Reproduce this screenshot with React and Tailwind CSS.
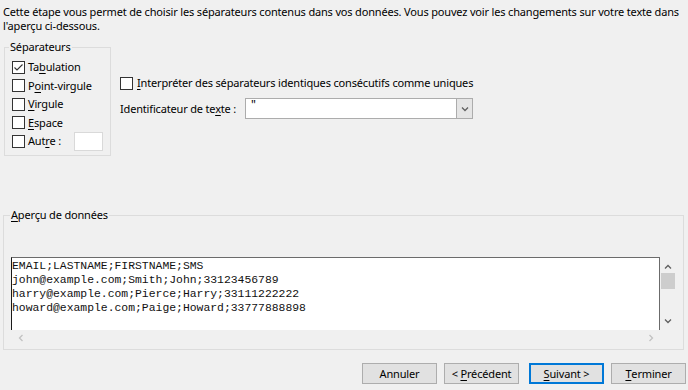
import React from 'react';

const Check = ({ checked }) => (
  <span className="w-[13px] h-[13px] border border-[#333333] bg-white shrink-0 flex items-center justify-center">
    {checked && (
      <svg width="11" height="11" viewBox="0 0 11 11">
        <path d="M1.5 5.5 L4 8 L9.5 2.5" fill="none" stroke="#333333" strokeWidth="1.1" />
      </svg>
    )}
  </span>
);

const U = ({ children }) => <span className="underline underline-offset-[2px] decoration-[1px]">{children}</span>;

const Chevron = ({ dir = 'down', color = '#606060', size = 8 }) => {
  const paths = {
    down: 'M1 2.5 L4 5.5 L7 2.5',
    up: 'M1 5.5 L4 2.5 L7 5.5',
    left: 'M5.5 1 L2.5 4 L5.5 7',
    right: 'M2.5 1 L5.5 4 L2.5 7',
  };
  return (
    <svg width={size} height={size} viewBox="0 0 8 8">
      <path d={paths[dir]} fill="none" stroke={color} strokeWidth="1.3" />
    </svg>
  );
};

const Btn = ({ children, primary }) => (
  <button
    className={`w-[75px] h-[21px] flex items-center justify-center bg-[#e1e1e1] text-black leading-none whitespace-pre ${
      primary ? 'border-2 border-[#0078d7]' : 'border border-[#adadad]'
    }`}
  >
    {children}
  </button>
);

const rows = [
  { label: <>Ta<U>b</U>ulation</>, checked: true },
  { label: <>P<U>o</U>int-virgule</> },
  { label: <><U>V</U>irgule</> },
  { label: <><U>E</U>space</> },
];

const preview = [
  'EMAIL;LASTNAME;FIRSTNAME;SMS',
  'john@example.com;Smith;John;33123456789',
  'harry@example.com;Pierce;Harry;33111222222',
  'howard@example.com;Paige;Howard;33777888898',
];

export default function App() {
  return (
    <div className="w-[688px] h-[390px] bg-[#f0f0f0] text-black text-[11px] tracking-[-0.17px] leading-[14px] font-['Noto_Sans',sans-serif] overflow-hidden">
      <p className="pl-[3px] pt-[5px] whitespace-nowrap">
        Cette étape vous permet de choisir les séparateurs contenus dans vos données. Vous pouvez voir les changements sur votre texte dans
        <br />
        l'aperçu ci-dessous.
      </p>

      <div className="flex mt-[7px]">
        <fieldset className="ml-[4px] w-[107px] h-[116px] border border-[#dcdcdc] pl-[7px] pt-[4px]">
          <legend className="-ml-[3px] px-[1px] h-[14px]">Séparateurs</legend>
          {rows.map((r, i) => (
            <div key={i} className="flex items-center h-[18.5px] gap-[3px] whitespace-nowrap">
              <Check checked={r.checked} />
              <span>{r.label}</span>
            </div>
          ))}
          <div className="flex items-center h-[18.5px] gap-[3px] whitespace-nowrap">
            <Check />
            <span>Aut<U>r</U>e :</span>
            <span className="ml-[10px] w-[29px] h-[19px] bg-white border border-[#d9d9d9]" />
          </div>
        </fieldset>

        <div className="ml-[9px] pt-[35px]">
          <div className="flex items-center h-[16px] gap-[4px] whitespace-nowrap">
            <Check />
            <span><U>I</U>nterpréter des séparateurs identiques consécutifs comme uniques</span>
          </div>
          <div className="flex items-center mt-[7px] whitespace-nowrap">
            <span className="w-[125px]">Identificateur de te<U>x</U>te :</span>
            <div className="w-[228px] h-[21px] bg-white border border-[#acacac] flex">
              <span className="flex-1 pl-[5px] leading-[12px] text-[12px]">"</span>
              <span className="w-[16px] h-full bg-[#e5e5e5] border-l border-[#acacac] flex items-center justify-center">
                <Chevron />
              </span>
            </div>
          </div>
        </div>
      </div>

      <fieldset className="mt-[52px] ml-[3px] w-[681px] h-[142px] border border-[#dcdcdc] pl-[8px] pr-[6px]">
        <legend className="-ml-[2px] px-[1px] h-[14px]"><U>A</U>perçu de données</legend>
        <div className="flex mt-[35px]">
          <div className="w-[649px] h-[73px] bg-white border-t border-l border-r border-t-[#6b6b6b] border-l-[#1a1a1a] border-r-[#6b6b6b] overflow-hidden font-['Liberation_Mono',monospace] text-[11.4px] tracking-normal leading-[14px] text-[#111] pt-[1px] -ml-px">
            {preview.map((l) => (
              <div key={l} className="whitespace-pre">{l}</div>
            ))}
          </div>
          <div className="w-[16px] h-[73px] flex flex-col items-center">
            <span className="h-[14px] flex items-end"><Chevron dir="up" size={8} /></span>
            <span className="mt-[2px] w-[14px] h-[16px] bg-[#cdcdcd]" />
            <span className="mt-auto mb-[5px]"><Chevron dir="down" size={8} /></span>
          </div>
        </div>
        <div className="h-[16px] flex items-center justify-between pl-[5px] pr-[22px]">
          <Chevron dir="left" color="#c2c2c2" />
          <Chevron dir="right" color="#c2c2c2" />
        </div>
      </fieldset>

      <div className="flex justify-end mt-[13px] pr-[2px]">
        <Btn>Annuler</Btn>
        <div className="ml-[7px]"><Btn>{'< '}<U>P</U>récédent</Btn></div>
        <div className="ml-[10px]"><Btn primary><U>S</U>uivant{' >'}</Btn></div>
        <div className="ml-[7px]"><Btn><U>T</U>erminer</Btn></div>
      </div>
    </div>
  );
}
